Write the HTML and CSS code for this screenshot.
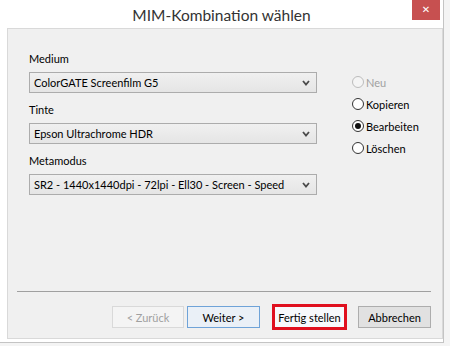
FILE: index.html
```html
<!DOCTYPE html>
<html lang="de">
<head>
    <meta charset="UTF-8">
    <title>MIM-Kombination wählen</title>
    <link rel="stylesheet" href="styles.css">
</head>
<body>
    <div class="window">
        <div class="titlebar">
            <span class="title">MIM-Kombination wählen</span>
            <span class="close-btn">&#x2715;</span>
        </div>

        <div class="panel">
            <div class="content">
                <div class="fields">
                    <label class="field-label">Medium</label>
                    <div class="select">
                        <span>ColorGATE Screenfilm G5</span>
                        <svg class="chevron" width="8" height="6" viewBox="0 0 8 6"><path d="M1 1 L4 4.5 L7 1" fill="none" stroke="#4a4a4a" stroke-width="1.8"/></svg>
                    </div>

                    <label class="field-label">Tinte</label>
                    <div class="select">
                        <span>Epson Ultrachrome HDR</span>
                        <svg class="chevron" width="8" height="6" viewBox="0 0 8 6"><path d="M1 1 L4 4.5 L7 1" fill="none" stroke="#4a4a4a" stroke-width="1.8"/></svg>
                    </div>

                    <label class="field-label">Metamodus</label>
                    <div class="select">
                        <span>SR2 - 1440x1440dpi - 72lpi - Ell30 - Screen - Speed</span>
                        <svg class="chevron" width="8" height="6" viewBox="0 0 8 6"><path d="M1 1 L4 4.5 L7 1" fill="none" stroke="#4a4a4a" stroke-width="1.8"/></svg>
                    </div>
                </div>

                <div class="options">
                    <div class="radio disabled"><span class="dot"></span>Neu</div>
                    <div class="radio"><span class="dot"></span>Kopieren</div>
                    <div class="radio checked"><span class="dot"></span>Bearbeiten</div>
                    <div class="radio"><span class="dot"></span>Löschen</div>
                </div>
            </div>

            <div class="separator"></div>

            <div class="buttons">
                <button class="btn disabled">&lt; Zurück</button>
                <button class="btn default">Weiter &gt;</button>
                <button class="btn marked">Fertig stellen</button>
                <button class="btn">Abbrechen</button>
            </div>
        </div>
    </div>
</body>
</html>
```

FILE: styles.css
```css
html, body {
    margin: 0;
    padding: 0;
}

body {
    width: 450px;
    height: 346px;
    background-color: #f4f4f4;
    font-family: 'Lato', sans-serif;
    font-size: 11px;
    color: #000;
    overflow: hidden;
}

.window {
    width: 444px;
    height: 343px;
    background-color: #fff;
    border-right: 1px solid #c4c4c4;
    border-bottom: 1px solid #c4c4c4;
    box-sizing: border-box;
    padding: 0 0 0 7px;
    display: flex;
    flex-direction: column;
}

.titlebar {
    height: 28px;
    display: flex;
    justify-content: center;
    position: relative;
}

.title {
    font-size: 15.5px;
    color: #333;
    line-height: 16px;
    padding-top: 7px;
    padding-right: 7px;
}

.close-btn {
    position: absolute;
    top: 0;
    right: 3px;
    width: 28px;
    height: 20px;
    background-color: #c75050;
    color: #fff;
    font-family: 'DejaVu Sans', sans-serif;
    font-size: 10px;
    line-height: 20px;
    text-align: center;
}

.panel {
    width: 436px;
    height: 311px;
    box-sizing: border-box;
    background-color: #f0f0f0;
    border: 1px solid #d9d9d9;
    display: flex;
    flex-direction: column;
}

.content {
    flex: 1;
    display: flex;
    padding: 22px 0 0 21px;
}

.fields {
    width: 288px;
    display: flex;
    flex-direction: column;
}

.field-label {
    display: block;
    height: 16px;
    line-height: 16px;
    margin-bottom: 5px;
}

.select {
    height: 21px;
    box-sizing: border-box;
    border: 1px solid #acacac;
    background: linear-gradient(#f0f0f0, #e5e5e5);
    display: flex;
    align-items: center;
    justify-content: space-between;
    padding: 0 6px 0 4px;
    margin-bottom: 9px;
    white-space: nowrap;
}

.chevron {
    flex: none;
}

.options {
    margin-left: 35px;
    padding-top: 20px;
    display: flex;
    flex-direction: column;
}

.radio {
    height: 22px;
    display: flex;
    align-items: center;
}

.radio .dot {
    width: 12px;
    height: 12px;
    box-sizing: border-box;
    border: 1px solid #333;
    border-radius: 50%;
    background-color: #fff;
    margin-right: 2px;
    position: relative;
}

.radio.checked .dot::after {
    content: "";
    position: absolute;
    left: 2px;
    top: 2px;
    width: 6px;
    height: 6px;
    border-radius: 50%;
    background-color: #111;
}

.radio.disabled {
    color: #a0a0a0;
}

.radio.disabled .dot {
    border-color: #bcbcbc;
    background-color: #f4f4f4;
}

.separator {
    height: 1px;
    background-color: #a0a0a0;
    margin: 0 11px 14px 9px;
}

.buttons {
    display: flex;
    justify-content: flex-end;
    padding: 0 11px 10px 0;
}

.btn {
    height: 22px;
    width: 73px;
    box-sizing: border-box;
    border: 1px solid #adadad;
    background-color: #e1e1e1;
    font-family: 'Lato', sans-serif;
    font-size: 11px;
    color: #000;
    padding: 0;
    margin-left: 3px;
    white-space: nowrap;
}

.btn.disabled {
    width: 72px;
    border-color: #d9d9d9;
    background-color: #f4f4f4;
    color: #a0a0a0;
}

.btn.default {
    border-color: #6fa3d8;
    background-color: #eaf0f7;
}

.btn.marked {
    width: 69px;
    height: 20px;
    margin: 1px 0 0 15px;
    background-color: #f7f9fc;
    border: none;
    outline: 3px solid #e0101f;
}

.btn.marked + .btn {
    margin-left: 14px;
}
```
